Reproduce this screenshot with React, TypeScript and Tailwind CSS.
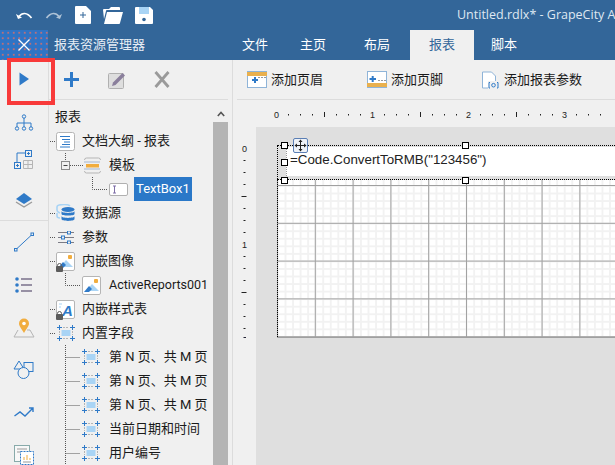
import type { ReactNode } from "react";

const BLUE = "#2f7ac8";
const LIGHT = "#a9d4f5";

function Undo({ flip = false }: { flip?: boolean }) {
  return (
    <svg width="18" height="14" viewBox="0 0 18 14" style={flip ? { transform: "scaleX(-1)", opacity: 0.6 } : undefined}>
      <path d="M1 6 L3 11 L7 9.5 Z" fill="#fff" />
      <path d="M4 8.5 C7 4.5 12 4 16.5 10" fill="none" stroke="#fff" strokeWidth="1.7" />
    </svg>
  );
}

function NewFile() {
  return (
    <svg width="16" height="18" viewBox="0 0 16 18">
      <path d="M0 1 a1 1 0 0 1 1-1 H11 L16 5 V17 a1 1 0 0 1-1 1 H1 a1 1 0 0 1-1-1 Z" fill="#fff" />
      <path d="M8 6 V12 M5 9 H11" stroke="#336699" strokeWidth="1" />
    </svg>
  );
}

function OpenFolder() {
  return (
    <svg width="20" height="17" viewBox="0 0 20 17">
      <path d="M0 3 a1 1 0 0 1 1-1 H6 L8 0 H16 a1 1 0 0 1 1 1 V3 H4 a1 1 0 0 0-1 1 L1 12 Z" fill="#fff" />
      <path d="M4 5 H20 L17 16 a1 1 0 0 1-1 1 H1 Z" fill="#fff" />
    </svg>
  );
}

function Save() {
  return (
    <svg width="18" height="17" viewBox="0 0 18 17">
      <path d="M0 1 a1 1 0 0 1 1-1 H15 L18 3 V16 a1 1 0 0 1-1 1 H1 a1 1 0 0 1-1-1 Z" fill="#fff" />
      <rect x="4" y="0" width="10" height="7" fill={LIGHT} />
      <circle cx="9" cy="12.5" r="1.8" fill="#336699" />
    </svg>
  );
}

/* left rail icons */
function RailIcon({ name }: { name: string }) {
  const s = { fill: "none", stroke: BLUE, strokeWidth: 1 };
  switch (name) {
    case "play":
      return (
        <svg width="20" height="20" viewBox="0 0 20 20">
          <path d="M5.5 3.5 L15 10 L5.5 16.5 Z" fill={BLUE} />
        </svg>
      );
    case "org":
      return (
        <svg width="20" height="20" viewBox="0 0 20 20">
          <g {...s}>
            <circle cx="10" cy="3.5" r="1.7" />
            <circle cx="3" cy="15.5" r="1.7" />
            <circle cx="10" cy="15.5" r="1.7" />
            <circle cx="17" cy="15.5" r="1.7" />
            <path d="M10 5 V14 M3 14 V10 H17 V14" />
          </g>
        </svg>
      );
    case "matrix":
      return (
        <svg width="20" height="20" viewBox="0 0 20 20">
          <path d="M3 12 V3 H11" {...s} />
          <rect x="11.5" y="0.5" width="6" height="6" {...s} />
          <path d="M13 3.5 H16 M14.5 2 V5" {...s} />
          <rect x="0.5" y="12.5" width="6" height="6" {...s} />
          <path d="M2 15.5 H5 M3.5 14 V17" {...s} />
          <path d="M9.5 10.5 H18.5 V18.5 H9.5 Z M14 10.5 V18.5 M9.5 14.5 H18.5" fill="none" stroke="#b5b5b5" />
        </svg>
      );
    case "layers":
      return (
        <svg width="20" height="20" viewBox="0 0 20 20">
          <path d="M2 12 L10 17 L18 12" fill="none" stroke="#9a9a9a" strokeWidth="1.4" />
          <path d="M10 3 L18 9 L10 14 L2 9 Z" fill={BLUE} />
        </svg>
      );
    case "line":
      return (
        <svg width="20" height="20" viewBox="0 0 20 20">
          <rect x="0.5" y="16.5" width="2.5" height="2.5" {...s} />
          <rect x="17" y="1" width="2.5" height="2.5" {...s} />
          <path d="M3 16.5 L17 3.5" {...s} />
        </svg>
      );
    case "list":
      return (
        <svg width="20" height="20" viewBox="0 0 20 20">
          <circle cx="3" cy="4" r="1.8" fill={BLUE} />
          <circle cx="3" cy="10" r="1.8" fill={BLUE} />
          <circle cx="3" cy="16" r="1.8" fill={BLUE} />
          <path d="M7 4 H18 M7 10 H18 M7 16 H18" stroke="#79708a" strokeWidth="1.5" />
        </svg>
      );
    case "map":
      return (
        <svg width="22" height="20" viewBox="0 0 22 20">
          <path d="M5 12 L1 19 H21 L17 12 H14" fill="none" stroke="#b5b5b5" />
          <path d="M11 15 C8 10 6 8 6 5.5 A5 5 0 0 1 16 5.5 C16 8 14 10 11 15 Z" fill="#f1ad3f" />
          <circle cx="11" cy="5.5" r="1.8" fill="#fff" />
        </svg>
      );
    case "shapes":
      return (
        <svg width="22" height="20" viewBox="0 0 22 20">
          <g {...s}>
            <path d="M6 1 L11 9 H1 Z" />
            <rect x="11" y="2.5" width="9" height="9" />
            <circle cx="10.5" cy="13" r="5.5" fill="#f0f0f0" />
          </g>
        </svg>
      );
    case "chart":
      return (
        <svg width="20" height="20" viewBox="0 0 20 20">
          <path d="M0.5 14 L6 10 L11 14 L18.5 6.5 M15 6 H19 V10" fill="none" stroke={BLUE} strokeWidth="1.4" />
        </svg>
      );
    default:
      return (
        <svg width="20" height="20" viewBox="0 0 20 20">
          <rect x="0.5" y="0.5" width="15" height="16" fill="#f8f8f8" stroke="#8aa" />
          <path d="M3 4 H13 M3 7 H6" stroke="#9a9a9a" />
          <rect x="6.5" y="6.5" width="13" height="13" fill="#fff" stroke={BLUE} strokeDasharray="2 1" />
          <path d="M10 15 V12 M13 15 V10 M16 15 V13" stroke="#f1ad3f" />
          <path d="M9 17 H17" stroke="#999" />
        </svg>
      );
  }
}

/* tree icons */
function OutlineIcon() {
  return (
    <svg width="19" height="19" viewBox="0 0 19 19">
      <rect x="0.5" y="0.5" width="18" height="18" rx="2" fill="#fff" stroke="#b5b5b5" />
      <path d="M4 4.5 H14 M6 7.5 H14 M8 10 H14 M6 12.5 H14 M4 15 H14" stroke={BLUE} />
    </svg>
  );
}

function BandIcon() {
  return (
    <svg width="17" height="17" viewBox="0 0 17 17">
      <path d="M0.5 3 a2 2 0 0 1 2-2 H14.5 a2 2 0 0 1 2 2 M0.5 14 a2 2 0 0 0 2 2 H14.5 a2 2 0 0 0 2-2" fill="none" stroke="#b5b5b5" />
      <path d="M0.5 5 H16.5 M0.5 12 H16.5" stroke="#5a7fb5" strokeDasharray="1 1" />
      <rect x="2" y="7" width="13" height="3.5" fill="#f1ad3f" />
    </svg>
  );
}

function TextBoxIcon() {
  return (
    <svg width="19" height="13" viewBox="0 0 19 13">
      <rect x="0.5" y="0.5" width="18" height="12" rx="1.5" fill="#fff" stroke="#b0b0b0" />
      <path d="M4 3 H7 M4 10 H7 M5.5 3 V10" stroke="#7f6fa8" fill="none" />
    </svg>
  );
}

function DbIcon() {
  return (
    <svg width="19" height="18" viewBox="0 0 19 18">
      <path d="M1 6 V3 C1 1 4 0.5 8 0.5 C11 0.5 13 1 14 2 M1 6 C1 8 2 8 4 9 M1 9 V12 C1 13 2 14 4 14" fill="none" stroke={LIGHT} strokeWidth="1.6" />
      <ellipse cx="12" cy="5.5" rx="6.5" ry="2.5" fill={BLUE} />
      <path d="M5.5 7 V10 C5.5 12 18.5 12 18.5 10 V7 C18.5 9.5 5.5 9.5 5.5 7 Z" fill={BLUE} />
      <path d="M5.5 12 V15 C5.5 17.5 18.5 17.5 18.5 15 V12 C18.5 14.5 5.5 14.5 5.5 12 Z" fill={BLUE} />
    </svg>
  );
}

function ParamIcon() {
  return (
    <svg width="16" height="13" viewBox="0 0 16 13">
      <path d="M0 1.5 H9 M13 1.5 H16 M0 6.5 H3 M7 6.5 H16 M0 11.5 H9 M13 11.5 H16" stroke="#7c7c86" />
      <rect x="9.5" y="0" width="3" height="3" fill="none" stroke={BLUE} />
      <rect x="3.5" y="5" width="3" height="3" fill="none" stroke={BLUE} />
      <rect x="9.5" y="10" width="3" height="3" fill="none" stroke={BLUE} />
    </svg>
  );
}

function ImageIcon({ lock = false }: { lock?: boolean }) {
  return (
    <span className="relative inline-flex">
      <svg width="19" height="19" viewBox="0 0 19 19">
        <rect x="0.5" y="0.5" width="18" height="18" rx="1.5" fill="#fff" stroke="#b5b5b5" />
        <rect x="12" y="3" width="4" height="4" rx="1" fill="#f1ad3f" />
        <path d="M4 15 L10 8 L17 15 Z" fill={LIGHT} />
        <path d="M2 16 L7 10 L10 13 L7 16 Z" fill={BLUE} />
      </svg>
      {lock && <LockBadge />}
    </span>
  );
}

function LockBadge() {
  return (
    <svg width="7" height="9" viewBox="0 0 7 9" className="absolute left-0 bottom-[-1px]">
      <rect x="0" y="3" width="7" height="6" rx="1" fill="#5c5c5c" />
      <path d="M1.5 4 V2.5 a2 2 0 0 1 4 0 V4" fill="none" stroke="#5c5c5c" />
    </svg>
  );
}

function StyleIcon() {
  return (
    <span className="relative inline-flex">
      <svg width="19" height="19" viewBox="0 0 19 19">
        <rect x="0.5" y="0.5" width="18" height="18" rx="1.5" fill="#fff" stroke="#b5b5b5" />
        <path d="M3 4 H6 M3 7 H5" stroke={LIGHT} />
        <text x="6" y="16" fontSize="15" fontWeight="700" fontStyle="italic" fill={BLUE} fontFamily="Liberation Sans, sans-serif">A</text>
      </svg>
      <LockBadge />
    </span>
  );
}

function FieldIcon() {
  const d = "M0 2.5 H5 M2.5 0 V5 M13 2.5 H18 M15.5 0 V5 M0 13.5 H5 M2.5 11 V16 M13 13.5 H18 M15.5 11 V16";
  return (
    <svg width="18" height="16" viewBox="0 0 18 16">
      <path d="M6 2.5 H12 M6 13.5 H12 M2.5 6 V10 M15.5 6 V10" stroke="#b5b5b5" strokeDasharray="2 1" />
      <path d={d} stroke={BLUE} />
      <rect x="4.5" y="5" width="9" height="6" fill={LIGHT} />
    </svg>
  );
}

/* dotted connector gutters of the tree */
const DOT = { stroke: "#555", strokeDasharray: "1 1", fill: "none" };

function Gutter({ kind }: { kind: "root" | "child" | "last" | "collapse" | "leaf" }) {
  if (kind === "root")
    return (
      <svg width="6" height="24" className="shrink-0">
        <path d="M1 12.5 H6" {...DOT} />
      </svg>
    );
  if (kind === "collapse")
    return (
      <svg width="35" height="24" className="shrink-0">
        <path d="M16.5 0 V7 M21 12.5 H35" {...DOT} />
        <rect x="12.5" y="8.5" width="8" height="8" fill="#f0f0f0" stroke="#8a8a8a" />
        <path d="M14.5 12.5 H18.5" stroke="#444" />
      </svg>
    );
  if (kind === "leaf")
    return (
      <svg width="60" height="24" className="shrink-0">
        <path d="M43.5 0 V12.5 H58" {...DOT} />
      </svg>
    );
  return (
    <svg width="33" height="24" className="shrink-0">
      <path d={kind === "last" ? "M16.5 0 V12.5 H31" : "M16.5 0 V24 M16.5 12.5 H31"} {...DOT} />
    </svg>
  );
}

function Row({ gutter, icon, iconBox, children }: { gutter: ReactNode; icon: ReactNode; iconBox: string; children: ReactNode }) {
  return (
    <div className="flex h-6 items-center whitespace-nowrap text-[#1a1a1a]">
      {gutter}
      <span className={`flex shrink-0 items-center justify-center ${iconBox}`}>{icon}</span>
      <span>{children}</span>
    </div>
  );
}

function Tree() {
  const root = "w-[21px] mr-[6px]";
  const child = "w-[18px] mr-[9px]";
  return (
    <div className="min-w-0 flex-1 overflow-hidden font-['Roboto','Noto_Sans_CJK_SC',sans-serif] text-[13px]">
      <div className="flex h-6 items-center pl-[6px] text-[#1a1a1a]">报表</div>
      <Row gutter={<Gutter kind="root" />} icon={<OutlineIcon />} iconBox={root}>文档大纲 - 报表</Row>
      <Row gutter={<Gutter kind="collapse" />} icon={<BandIcon />} iconBox="w-[17px] mr-[8px]">模板</Row>
      <div className="flex h-6 items-center whitespace-nowrap">
        <Gutter kind="leaf" />
        <span className="flex w-[19px] shrink-0 items-center justify-center"><TextBoxIcon /></span>
        <span className="ml-[6px] flex h-6 items-center bg-[#2a78c8] px-[2px] text-white">TextBox1</span>
      </div>
      <Row gutter={<Gutter kind="root" />} icon={<DbIcon />} iconBox={root}>数据源</Row>
      <Row gutter={<Gutter kind="root" />} icon={<ParamIcon />} iconBox={root}>参数</Row>
      <Row gutter={<Gutter kind="root" />} icon={<ImageIcon lock />} iconBox={root}>内嵌图像</Row>
      <Row gutter={<Gutter kind="last" />} icon={<ImageIcon />} iconBox={child}><span className="text-[12.5px]">ActiveReports001</span></Row>
      <Row gutter={<Gutter kind="root" />} icon={<StyleIcon />} iconBox={root}>内嵌样式表</Row>
      <Row gutter={<Gutter kind="root" />} icon={<FieldIcon />} iconBox={root}>内置字段</Row>
      {["第 N 页、共 M 页", "第 N 页、共 M 页", "第 N 页、共 M 页", "当前日期和时间", "用户编号"].map((t, i) => (
        <Row key={i} gutter={<Gutter kind="child" />} icon={<FieldIcon />} iconBox={child}>{t}</Row>
      ))}
    </div>
  );
}

function HRuler() {
  const ticks = Array.from({ length: 28 }, (_, i) => i);
  return (
    <svg width="382" height="27" className="block">
      {ticks.map((i) => {
        const x = 43.5 + i * 12;
        if (i % 8 === 0)
          return (
            <text key={i} x={x} y="17.5" fontSize="9" textAnchor="middle" fill="#222" fontFamily="Liberation Sans, sans-serif">
              {i / 8}
            </text>
          );
        if (i % 4 === 0) return <path key={i} d={`M${x} 12 V17`} stroke="#222" />;
        return <path key={i} d={`M${x} 14 V15.5`} stroke="#222" />;
      })}
    </svg>
  );
}

function VRuler() {
  const ticks = Array.from({ length: 16 }, (_, i) => i);
  return (
    <svg width="23" height="337" className="block shrink-0">
      {ticks.map((i) => {
        const y = 21.5 + i * 12;
        if (i % 8 === 0)
          return (
            <text key={i} x="11.5" y={y + 3} fontSize="9" textAnchor="middle" fill="#222" fontFamily="Liberation Sans, sans-serif">
              {i / 8}
            </text>
          );
        if (i % 4 === 0) return <path key={i} d={`M8.5 ${y} H13.5`} stroke="#222" />;
        return <path key={i} d={`M10.5 ${y} H12.5`} stroke="#222" />;
      })}
      <path d="M10.5 210.5 H13" stroke="#223" />
    </svg>
  );
}

function Handle({ className }: { className: string }) {
  return <span className={`absolute h-[7px] w-[7px] border border-black bg-white ${className}`} />;
}

function AddHeader({ footer = false }: { footer?: boolean }) {
  return (
    <svg width="20" height="17" viewBox="0 0 20 17">
      <rect x="0.5" y="0.5" width="19" height="16" fill="#fff" stroke="#8fb4d8" />
      <rect x="0" y={footer ? 12 : 1} width="20" height="4" fill="#e9b04e" />
      <path d={footer ? "M11 9.5 H19" : "M11 6.5 H19"} stroke="#999" strokeDasharray="2 1" />
      <path d={footer ? "M2.5 8 H9 M5.7 5 V11" : "M5 9 H11 M8 6 V12"} stroke={BLUE} strokeWidth="2" />
    </svg>
  );
}

function AddParam() {
  return (
    <svg width="17" height="18" viewBox="0 0 17 18">
      <path d="M0.5 1 H9.5 L13.5 5 V17 H0.5 Z" fill="#fff" stroke="#8fb4d8" />
      <rect x="6" y="10" width="11" height="8" fill="#f0f0f0" />
      <path d="M8 11.5 H7 V17 H8 M15 11.5 H16 V17 H15" fill="none" stroke={BLUE} />
      <circle cx="11.5" cy="14.2" r="1.8" fill="none" stroke={BLUE} />
    </svg>
  );
}

export default function App() {
  const rail = [
    { name: "play", mt: "mt-[9px]" },
    { name: "org", mt: "mt-[24px]" },
    { name: "matrix", mt: "mt-[17px]" },
    { name: "layers", mt: "mt-[20px]" },
  ];
  const rail2 = [
    { name: "line", mt: "mt-[11px]" },
    { name: "list", mt: "mt-[23px]" },
    { name: "map", mt: "mt-[23px]" },
    { name: "shapes", mt: "mt-[22px]" },
    { name: "chart", mt: "mt-[22px]" },
    { name: "report", mt: "mt-[23px]" },
  ];

  return (
    <div className="relative flex h-[465px] w-[615px] flex-col overflow-hidden bg-[#f0f0f0] font-['Open_Sans','Noto_Sans_CJK_SC',sans-serif]">
      {/* title bar + tabs */}
      <div className="h-[60px] shrink-0 bg-[#336699] text-white">
        <div className="flex h-[30px] items-center whitespace-nowrap">
          <div className="flex w-[457px] shrink-0 items-center">
            <span className="ml-[15px] flex w-[30px]"><Undo /></span>
            <span className="flex w-[31px]"><Undo flip /></span>
            <span className="ml-[-1px] flex w-[29px]"><NewFile /></span>
            <span className="ml-[-1px] flex w-[32px]"><OpenFolder /></span>
            <Save />
          </div>
          <span className="text-[12.5px] text-[#dfe8f2]">Untitled.rdlx* - GrapeCity A</span>
        </div>
        <div className="flex h-[30px] items-stretch text-[13px]">
          <button className="flex w-[48px] items-center justify-center bg-[#2f74c5] bg-[radial-gradient(#b8707c_0.7px,transparent_0.9px)] bg-size-[5.5px_5.5px]">
            <svg width="14" height="14" viewBox="0 0 14 14">
              <path d="M1.5 1.5 L12.5 12.5 M12.5 1.5 L1.5 12.5" stroke="#fff" strokeWidth="1.3" />
            </svg>
          </button>
          <span className="flex w-[182px] items-center pl-[6px] text-[#e6edf5]">报表资源管理器</span>
          <span className="flex w-[60px] items-center pl-[12px]">文件</span>
          <span className="flex w-[64px] items-center pl-[10px]">主页</span>
          <span className="flex w-[56px] items-center pl-[10px]">布局</span>
          <span className="flex w-[64px] items-center justify-center bg-[#f0f0f0] text-[#336699]">报表</span>
          <span className="flex items-center pl-[17px]">脚本</span>
        </div>
      </div>

      <div className="flex min-h-0 flex-1">
        {/* left rail */}
        <div className="flex w-[49px] shrink-0 flex-col border-r border-[#dcdcdc]">
          <div className="flex h-[160px] flex-col items-center">
            {rail.map((r) => (
              <span key={r.name} className={`flex h-5 items-center justify-center ${r.mt}`}>
                <RailIcon name={r.name} />
              </span>
            ))}
          </div>
          <div className="h-px bg-[#dcdcdc]" />
          <div className="flex flex-col items-center">
            {rail2.map((r) => (
              <span key={r.name} className={`flex h-5 items-center justify-center ${r.mt}`}>
                <RailIcon name={r.name} />
              </span>
            ))}
          </div>
        </div>

        {/* report explorer */}
        <div className="flex w-[179px] shrink-0 flex-col">
          <div className="flex h-[40px] shrink-0 items-center border-b border-[#dcdcdc]">
            <svg width="15" height="15" viewBox="0 0 15 15" className="ml-[15px]">
              <path d="M7.5 0 V15 M0 7.5 H15" stroke={BLUE} strokeWidth="3" />
            </svg>
            <svg width="18" height="18" viewBox="0 0 18 18" className="ml-[29px]">
              <rect x="0.5" y="2.5" width="15" height="15" rx="1" fill="#dedede" stroke="#b0b0b0" />
              <path d="M4 15 L5 11.5 L14.5 2 L17 4.5 L7.5 14 Z" fill="#8a7f9c" />
            </svg>
            <svg width="16" height="17" viewBox="0 0 16 17" className="ml-[28px]">
              <path d="M1.5 1 L14.5 16 M14.5 1 L1.5 16" stroke="#9a9a9a" strokeWidth="2.8" />
            </svg>
          </div>
          <div className="flex min-h-0 flex-1 pt-[5px]">
            <Tree />
            <div className="flex w-[15px] shrink-0 flex-col bg-[#f0f0f0]">
              <div className="flex h-[17px] items-center justify-center">
                <svg width="8" height="6" viewBox="0 0 8 6">
                  <path d="M0.8 5 L4 1.5 L7.2 5" fill="none" stroke="#555" strokeWidth="1.6" />
                </svg>
              </div>
              <div className="flex-1 bg-[#b4b4b4]" />
            </div>
          </div>
        </div>

        <div className="w-[4px] shrink-0" />

        {/* designer */}
        <div className="flex min-w-0 flex-1 flex-col border-l border-[#dcdcdc]">
          <div className="ml-[4px] flex h-[40px] shrink-0 items-center whitespace-nowrap border-b border-[#dcdcdc] text-[13px] text-[#1a1a1a]">
            <span className="ml-[10px] flex w-[120px] items-center gap-[4px]"><AddHeader />添加页眉</span>
            <span className="flex w-[115px] items-center gap-[4px]"><AddHeader footer />添加页脚</span>
            <span className="flex items-center gap-[5px]"><AddParam />添加报表参数</span>
          </div>
          <div className="h-[27px] shrink-0"><HRuler /></div>
          <div className="flex min-h-0 flex-1">
            <VRuler />
            <div className="min-w-0 flex-1 overflow-hidden bg-[#dfdfdf] pl-[21px] pt-[18px]">
              {/* report page */}
              <div className="relative flex h-[193px] w-[400px] flex-col border-b border-[#a0a0a0]">
                <div className="h-[35px] shrink-0 border-y border-dotted border-black pl-[9px] pt-[1px]">
                  <div className="h-[29px] border-l border-dotted border-[#999] bg-white pl-[3px] pt-[4px] font-['Liberation_Sans',sans-serif] text-[13.33px] leading-[18px] text-[#222]">
                    =Code.ConvertToRMB("123456")
                  </div>
                </div>
                <div className="flex-1 border-l border-dotted border-black bg-white bg-[linear-gradient(to_right,#a0a0a0_1px,transparent_1px),linear-gradient(to_bottom,#a0a0a0_1px,transparent_1px),linear-gradient(to_right,#f2f2f2_2px,transparent_2px),linear-gradient(to_bottom,#f2f2f2_2px,transparent_2px)] bg-size-[37.8px_37.8px,37.8px_37.8px,7.56px_7.56px,7.56px_7.56px] bg-position-[-1px_5px,-1px_5px,-1px_5px,-1px_5px]" />
                <div className="absolute bottom-0 left-0 top-0 border-l border-dotted border-black" />
                <Handle className="left-[4px] top-[-3px]" />
                <Handle className="left-[185px] top-[-3px]" />
                <Handle className="left-[4px] top-[14px]" />
                <Handle className="left-[4px] top-[32px]" />
                <Handle className="left-[185px] top-[32px]" />
                <span className="absolute left-[16px] top-[-7px] flex h-[15px] w-[15px] items-center justify-center rounded-[2px] border border-[#5b7fb5] bg-[#eef2f8]">
                  <svg width="13" height="13" viewBox="0 0 13 13">
                    <path d="M6.5 1 V12 M1 6.5 H12" stroke="#222" />
                    <path d="M6.5 0.5 L4.5 3 H8.5 Z M6.5 12.5 L4.5 10 H8.5 Z M0.5 6.5 L3 4.5 V8.5 Z M12.5 6.5 L10 4.5 V8.5 Z" fill="#222" />
                  </svg>
                </span>
              </div>
            </div>
          </div>
        </div>
      </div>

      {/* red annotation box */}
      <div className="absolute left-[7px] top-[58px] h-[47px] w-[48px] border-4 border-[#f83a3a]" />
    </div>
  );
}
